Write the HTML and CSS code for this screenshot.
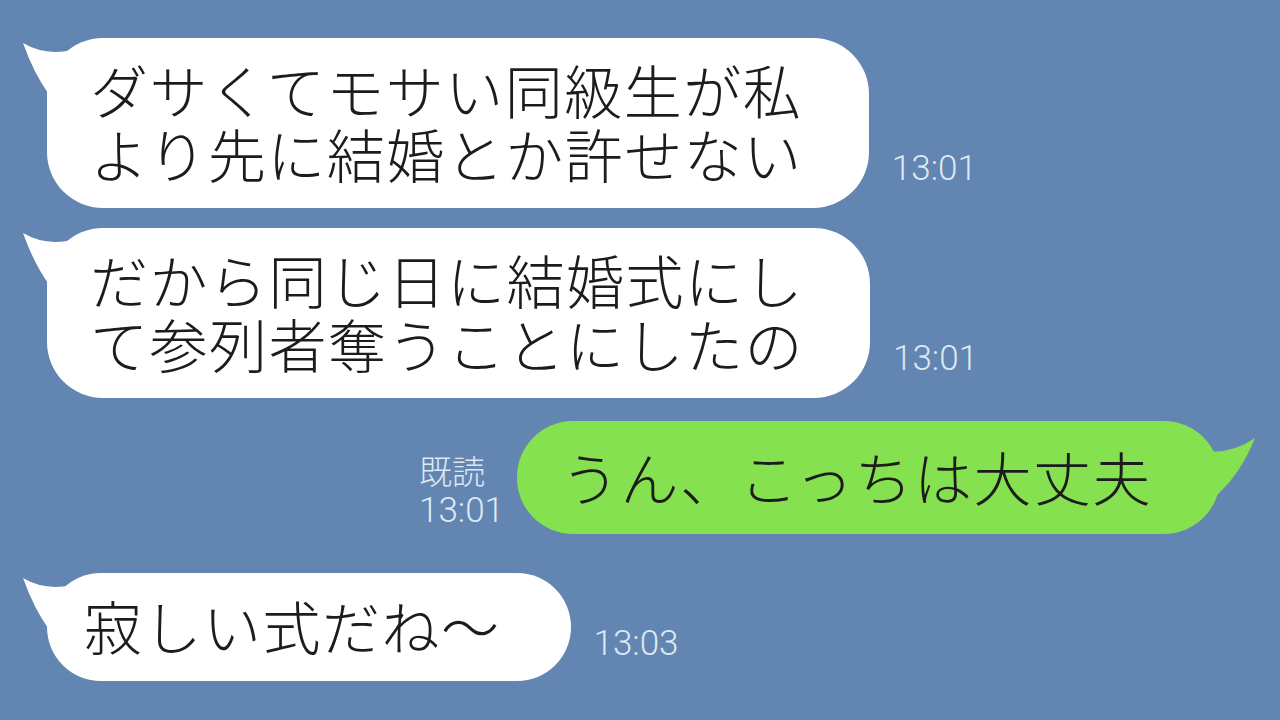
FILE: index.html
```html
<!DOCTYPE html>
<html>

<head>
  <meta charset="utf-8">
  <meta name="viewport" content="width=device-width">
  <title>トーク</title>
  <link rel="stylesheet" href="styles.css">
</head>

<body>
  <div class="talk">
    <div class="row row-in">
      <div class="bubble bubble-in">
        <svg class="tail tail-in" width="60" height="60" viewBox="0 0 60 60">
          <path d="M3 5 Q25 18 52 12 L52 58 L30 58 Q14 36 3 5 Z" />
        </svg>
        <p>ダサくてモサい同級生が私<br>より先に結婚とか許せない</p>
      </div>
      <span class="time">13:01</span>
    </div>

    <div class="row row-in">
      <div class="bubble bubble-in">
        <svg class="tail tail-in" width="60" height="60" viewBox="0 0 60 60">
          <path d="M3 5 Q25 18 52 12 L52 58 L30 58 Q14 36 3 5 Z" />
        </svg>
        <p>だから同じ日に結婚式にし<br>て参列者奪うことにしたの</p>
      </div>
      <span class="time">13:01</span>
    </div>

    <div class="row row-out">
      <div class="meta">
        <span class="read">既読</span>
        <span class="time">13:01</span>
      </div>
      <div class="bubble bubble-out">
        <svg class="tail tail-out" width="65" height="75" viewBox="0 0 65 75">
          <path d="M60 17 Q36 34 6 30 L6 74 L22 74 Q46 52 60 17 Z" />
        </svg>
        <p>うん、こっちは大丈夫</p>
      </div>
    </div>

    <div class="row row-in row-last">
      <div class="bubble bubble-in bubble-short">
        <svg class="tail tail-in" width="60" height="60" viewBox="0 0 60 60">
          <path d="M3 5 Q25 18 52 12 L52 58 L30 58 Q14 36 3 5 Z" />
        </svg>
        <p>寂しい式だね～</p>
      </div>
      <span class="time time-last">13:03</span>
    </div>
  </div>
</body>

</html>
```

FILE: styles.css
```css
* {
  margin: 0;
  box-sizing: border-box;
}

body {
  background-color: #6285b1;
  width: 1280px;
  height: 720px;
  overflow: hidden;
  font-family: "Noto Sans CJK JP", sans-serif;
}

/* 会話の列 */
.talk {
  display: flex;
  flex-direction: column;
  padding-top: 38px;
}

.row {
  display: flex;
  align-items: flex-end;
}

.row-in {
  padding-left: 47px;
  gap: 23px;
  margin-bottom: 20px;
}

.row-out {
  justify-content: flex-end;
  padding-right: 60px;
  gap: 13px;
  margin-top: 3px;
  margin-bottom: 39px;
}

/* 吹き出し */
.bubble {
  position: relative;
  border-radius: 56px;
  padding: 19px 66px 23px 43px;
}

.bubble p {
  position: relative;
  font-size: 58px;
  line-height: 64px;
  letter-spacing: 1.5px;
  font-weight: 300;
  color: #1c1c1c;
  white-space: nowrap;
}

.bubble-in {
  background-color: #fff;
}

.bubble-in .tail {
  fill: #fff;
}

.bubble-out {
  background-color: #86e150;
  padding: 23px 68px 26px 44px;
}

.bubble-out .tail {
  fill: #86e150;
}

.bubble-short {
  padding: 20px 70px 24px 37px;
}

/* しっぽ */
.tail {
  position: absolute;
  top: 0;
}

.tail-in {
  left: -27px;
}

.tail-out {
  right: -40px;
}

/* 時刻と既読 */
.time {
  font-family: Roboto, "Liberation Sans", sans-serif;
  font-weight: 300;
  font-size: 35px;
  line-height: 35px;
  color: #dde8f4;
  margin-bottom: 22px;
}

.time-last {
  margin-bottom: 20px;
}

.meta {
  display: flex;
  flex-direction: column;
  align-items: flex-start;
  gap: 6px;
  margin-bottom: 6px;
}

.meta .time {
  margin-bottom: 0;
}

.read {
  font-size: 33px;
  line-height: 33px;
  font-weight: 300;
  color: #dde8f4;
}
```
